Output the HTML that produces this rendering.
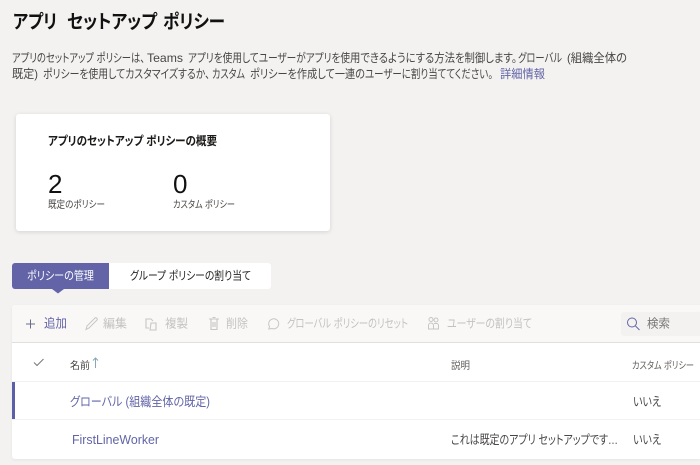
<!DOCTYPE html>
<html lang="ja">
<head>
<meta charset="utf-8">
<style>
html,body{margin:0;padding:0}
body{width:700px;height:465px;overflow:hidden;background:#f3f2f1;position:relative;font-family:"Liberation Sans","Noto Sans CJK JP",sans-serif;color:#252423}
.b{position:absolute}
svg{position:absolute;left:0;top:0;overflow:visible}
text{font-feature-settings:"palt";white-space:pre}
.d{font-size:12px;fill:#484644}
.h{font-size:19px;font-weight:700;fill:#111}
.m{font-size:10px;fill:#484644}
.g{font-size:12px;fill:#c4c2c0}
.r{font-size:12.500px;fill:#484644}
.l{font-size:12.500px;fill:#6264a7}
</style>
</head>
<body>
<div class="b" style="left:16px;top:114px;width:314px;height:117px;background:#fff;border-radius:3px;box-shadow:0 1px 5px rgba(0,0,0,.13)"></div>
<div class="b" style="left:12px;top:263px;width:259px;height:26px;background:#fff;border-radius:3px"></div>
<div class="b" style="left:12px;top:263px;width:97px;height:26px;background:#6264a7;border-radius:3px 0 0 3px"></div>
<div class="b" style="left:12px;top:305px;width:688px;height:154px;background:#fff;border-radius:3px 0 0 3px;box-shadow:0 1px 3px rgba(0,0,0,.06)"></div>
<div class="b" style="left:12px;top:305px;width:688px;height:37px;background:#f9f8f7;border-bottom:1px solid #e1dfdd;border-radius:3px 0 0 0"></div>
<div class="b" style="left:12px;top:381px;width:688px;height:1px;background:#f3f2f1"></div>
<div class="b" style="left:12px;top:419px;width:688px;height:1px;background:#f3f2f1"></div>
<div class="b" style="left:12px;top:382px;width:3px;height:37px;background:#5b5fa8"></div>
<div class="b" style="left:621px;top:312px;width:79px;height:24px;background:#f3f2f1;border-radius:3px 0 0 3px"></div>

<svg width="700" height="465" fill="none">
<path d="M52 289h12l-6 4.500z" fill="#6264a7"/>
<path d="M26 324h9M30.500 319.500v9" stroke="#6c6b8f" stroke-width="1"/>
<path d="M86 329.500l1-3.500 8-8c1-1 3 1 2 2l-8 8z" stroke="#c8c6c4" stroke-width="1"/>
<path d="M149 328h-3v-9h5l2 2M151 323h5v7h-6z" stroke="#c8c6c4" stroke-width="1.100"/>
<path d="M209 319h10M211 319v10.500h6V319M212.500 317.500h3M213 322v5M215 322v5" stroke="#c8c6c4" stroke-width="1.100"/>
<path d="M272 328.500a5 5 0 1 0-2.500-2l-.7 2.500z" stroke="#c8c6c4" stroke-width="1"/>
<circle cx="431" cy="319.500" r="2" stroke="#c8c6c4"/><circle cx="436" cy="320" r="2" stroke="#c8c6c4"/>
<path d="M428.500 329v-3.500a2.500 2.500 0 0 1 5 0V329zM434 323.500h2.500a2 2 0 0 1 2 2V329H434" stroke="#c8c6c4" stroke-width="1"/>
<path d="M34 362.500l3 3 6.500-6.500" stroke="#7a7674" stroke-width="1"/>
<path d="M95.500 368v-10M93 360.500l2.500-2.500 2.500 2.500" stroke="#8aa4b8" stroke-width="1"/>
<circle cx="632" cy="322.500" r="4.500" stroke="#6264a7"/><path d="M635.500 326l4 4" stroke="#6264a7"/>

<text class="h" x="13" y="28" textLength="44" lengthAdjust="spacingAndGlyphs">アプリ</text>
<text class="h" x="67" y="28" textLength="90" lengthAdjust="spacingAndGlyphs">セットアップ</text>
<text class="h" x="163" y="28" textLength="62" lengthAdjust="spacingAndGlyphs">ポリシー</text>

<text class="d" x="12" y="62" textLength="133" lengthAdjust="spacingAndGlyphs">アプリのセットアップ ポリシーは、</text>
<text class="d" x="147" y="62" textLength="36" lengthAdjust="spacingAndGlyphs">Teams</text>
<text class="d" x="188" y="62" textLength="162" lengthAdjust="spacingAndGlyphs">アプリを使用してユーザーがアプリを使</text>
<text class="d" x="350" y="62" textLength="167" lengthAdjust="spacingAndGlyphs">用できるようにする方法を制御します。</text>
<text class="d" x="518" y="62" textLength="44" lengthAdjust="spacingAndGlyphs">グローバル</text>
<text class="d" x="567" y="62" textLength="60" lengthAdjust="spacingAndGlyphs">(組織全体の</text>

<text class="d" x="12" y="78" textLength="26" lengthAdjust="spacingAndGlyphs">既定)</text>
<text class="d" x="43" y="78" textLength="167" lengthAdjust="spacingAndGlyphs">ポリシーを使用してカスタマイズするか、</text>
<text class="d" x="212" y="78" textLength="33" lengthAdjust="spacingAndGlyphs">カスタム</text>
<text class="d" x="250" y="78" textLength="115" lengthAdjust="spacingAndGlyphs">ポリシーを作成して一連の</text>
<text class="d" x="365" y="78" textLength="128" lengthAdjust="spacingAndGlyphs">ユーザーに割り当ててください。</text>
<text class="d" x="500" y="78" textLength="45" lengthAdjust="spacingAndGlyphs" style="fill:#6264a7">詳細情報</text>

<text x="48" y="145" textLength="169" lengthAdjust="spacingAndGlyphs" style="font-size:12px;font-weight:700;fill:#1b1a19">アプリのセットアップ ポリシーの概要</text>
<text x="48" y="193" style="font-size:26px;fill:#111">2</text>
<text x="173" y="193" style="font-size:26px;fill:#111">0</text>
<text class="m" x="48" y="208" textLength="57" lengthAdjust="spacingAndGlyphs">既定のポリシー</text>
<text class="m" x="173" y="208" textLength="62" lengthAdjust="spacingAndGlyphs">カスタム ポリシー</text>

<text x="27" y="279.500" textLength="67" lengthAdjust="spacingAndGlyphs" style="font-size:11.500px;fill:#fff">ポリシーの管理</text>
<text x="130" y="279.500" textLength="121" lengthAdjust="spacingAndGlyphs" style="font-size:11.500px;fill:#252423">グループ ポリシーの割り当て</text>

<text class="l" x="44" y="327.500" textLength="23" lengthAdjust="spacingAndGlyphs">追加</text>
<text class="g" x="103" y="327.500" textLength="24" lengthAdjust="spacingAndGlyphs">編集</text>
<text class="g" x="165" y="327.500" textLength="23" lengthAdjust="spacingAndGlyphs">複製</text>
<text class="g" x="226" y="327.500" textLength="22" lengthAdjust="spacingAndGlyphs">削除</text>
<text class="g" x="287" y="327.500" textLength="121" lengthAdjust="spacingAndGlyphs">グローバル ポリシーのリセット</text>
<text class="g" x="447" y="327.500" textLength="85" lengthAdjust="spacingAndGlyphs">ユーザーの割り当て</text>
<text x="647" y="327.500" textLength="23" lengthAdjust="spacingAndGlyphs" style="font-size:12px;fill:#7a7674">検索</text>

<text x="70" y="369" textLength="20" lengthAdjust="spacingAndGlyphs" style="font-size:10px;fill:#484644">名前</text>
<text class="m" x="451" y="369" textLength="19" lengthAdjust="spacingAndGlyphs" style="fill:#605e5c">説明</text>
<text class="m" x="632" y="369" textLength="62" lengthAdjust="spacingAndGlyphs" style="fill:#605e5c">カスタム ポリシー</text>

<text class="l" x="70" y="406" textLength="140" lengthAdjust="spacingAndGlyphs">グローバル (組織全体の既定)</text>
<text class="l" x="72" y="444" textLength="87" lengthAdjust="spacingAndGlyphs">FirstLineWorker</text>
<text class="r" x="451" y="444" textLength="167" lengthAdjust="spacingAndGlyphs">これは既定のアプリ セットアップです…</text>
<text class="r" x="633" y="406" textLength="28" lengthAdjust="spacingAndGlyphs">いいえ</text>
<text class="r" x="633" y="444" textLength="28" lengthAdjust="spacingAndGlyphs">いいえ</text>
</svg>
</body>
</html>
